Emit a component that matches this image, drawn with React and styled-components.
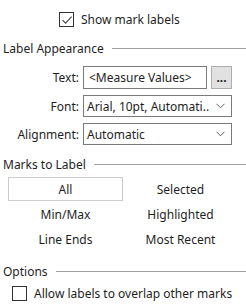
import React from 'react';
import styled, { createGlobalStyle } from 'styled-components';

const GlobalStyle = createGlobalStyle`
    body {
        margin: 0;
        background: #ffffff;
        font-family: "Noto Sans", "Open Sans", sans-serif;
        font-size: 12px;
        color: #1e1e1e;
    }
`;

function CheckBox({ checked }) {
    return (
        <Box>
            {checked && (
                <svg width="12" height="12" viewBox="0 0 12 12">
                    <path d="M1.5 6.2 L4.6 9.2 L10.6 2.6" fill="none" stroke="#444" strokeWidth="1.1" />
                </svg>
            )}
        </Box>
    );
}

function Chevron() {
    return (
        <svg width="9" height="6" viewBox="0 0 9 6">
            <path d="M0.5 0.8 L4.5 4.8 L8.5 0.8" fill="none" stroke="#606060" strokeWidth="1" />
        </svg>
    );
}

function SectionHeader({ title, top }) {
    return (
        <Header $top={top}>
            <span>{title}</span>
            <Rule />
        </Header>
    );
}

const marks = ['All', 'Selected', 'Min/Max', 'Highlighted', 'Line Ends', 'Most Recent'];

export default function App() {
    return (
        <Panel>
            <GlobalStyle />
            <CheckRow $top={7} $left={59} $height={25}>
                <CheckBox checked />
                <span>Show mark labels</span>
            </CheckRow>

            <SectionHeader title="Label Appearance" top={8} />
            <FormGrid>
                <FieldLabel>Text:</FieldLabel>
                <TextRow>
                    <TextBox>&lt;Measure Values&gt;</TextBox>
                    <DotsButton>...</DotsButton>
                </TextRow>
                <FieldLabel>Font:</FieldLabel>
                <Select>
                    <span>Arial, 10pt, Automati..</span>
                    <Chevron />
                </Select>
                <FieldLabel>Alignment:</FieldLabel>
                <Select>
                    <span>Automatic</span>
                    <Chevron />
                </Select>
            </FormGrid>

            <SectionHeader title="Marks to Label" top={11} />
            <MarksGrid>
                {marks.map((m, i) => (
                    <MarkOption key={m} $active={i === 0}>
                        {m}
                    </MarkOption>
                ))}
            </MarksGrid>

            <SectionHeader title="Options" top={12} />
            <CheckRow $top={0} $left={12} $height={27}>
                <CheckBox />
                <span>Allow labels to overlap other marks</span>
            </CheckRow>
        </Panel>
    );
}

const Panel = styled.div`
    width: 246px;
    height: 306px;
    display: flex;
    flex-direction: column;
    overflow: hidden;
`;

const CheckRow = styled.div`
    display: flex;
    flex-shrink: 0;
    align-items: center;
    gap: 7px;
    height: ${(p) => p.$height}px;
    margin-top: ${(p) => p.$top}px;
    padding-left: ${(p) => p.$left}px;
`;

const Box = styled.div`
    width: 13px;
    height: 13px;
    border: 1px solid #333333;
    background: #ffffff;
    display: flex;
    align-items: center;
    justify-content: center;
`;

const Header = styled.div`
    display: flex;
    flex-shrink: 0;
    align-items: center;
    gap: 8px;
    height: 17px;
    margin-top: ${(p) => p.$top}px;
    padding-left: 3px;
    white-space: nowrap;
`;

const Rule = styled.div`
    flex: 1;
    height: 1px;
    background: #a0a0a0;
`;

const FormGrid = styled.div`
    display: grid;
    flex-shrink: 0;
    grid-template-columns: 77px 1fr;
    column-gap: 4px;
    row-gap: 6px;
    padding: 0 14px 0 2px;
    margin-top: 9px;
`;

const FieldLabel = styled.div`
    display: flex;
    align-items: center;
    justify-content: flex-end;
`;

const TextRow = styled.div`
    display: flex;
    gap: 4px;
    height: 23px;
`;

const TextBox = styled.div`
    flex: 1;
    display: flex;
    align-items: center;
    padding-left: 5px;
    border: 1px solid #7a7a7a;
    white-space: nowrap;
    overflow: hidden;
`;

const DotsButton = styled.div`
    width: 21px;
    display: flex;
    align-items: flex-end;
    justify-content: center;
    padding-bottom: 4px;
    box-sizing: border-box;
    background: #e1e1e1;
    border: 1px solid #adadad;
    font-weight: bold;
    line-height: 1;
`;

const Select = styled.div`
    height: 22px;
    display: flex;
    align-items: center;
    justify-content: space-between;
    padding: 0 6px 0 3px;
    border: 1px solid #7a7a7a;
    box-sizing: border-box;
    white-space: nowrap;
`;

const MarksGrid = styled.div`
    display: grid;
    flex-shrink: 0;
    grid-template-columns: 115px 115px;
    grid-auto-rows: 24px;
    row-gap: 1px;
    padding-left: 8px;
    margin-top: 4px;
`;

const MarkOption = styled.div`
    display: flex;
    align-items: center;
    justify-content: center;
    box-sizing: border-box;
    border: 1px solid ${(p) => (p.$active ? '#cccccc' : 'transparent')};
    background: #ffffff;
`;
